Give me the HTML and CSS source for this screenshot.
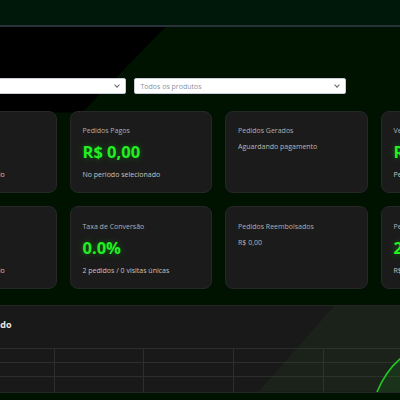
FILE: index.html
```html
<!DOCTYPE html>
<html lang="pt-BR">
<head>
<meta charset="utf-8">
<title>Dashboard</title>
<link rel="stylesheet" href="styles.css">
</head>
<body>
<header class="topbar"></header>
<div class="shade"></div>
<main class="content">
  <div class="filters">
    <div class="select"><span class="select-text"></span><span class="chev"></span></div>
    <div class="select"><span class="select-text">Todos os produtos</span><span class="chev"></span></div>
  </div>
  <section class="cards">
    <div class="card">
      <div class="card-title">Faturamento Total</div>
      <div class="card-value">R$ 0,00</div>
      <div class="card-sub">No período selecionado</div>
    </div>
    <div class="card">
      <div class="card-title">Pedidos Pagos</div>
      <div class="card-value">R$ 0,00</div>
      <div class="card-sub">No período selecionado</div>
    </div>
    <div class="card">
      <div class="card-title">Pedidos Gerados</div>
      <div class="card-note">Aguardando pagamento</div>
    </div>
    <div class="card">
      <div class="card-title">Vendas Aprovadas</div>
      <div class="card-value">R$ 0,00</div>
      <div class="card-sub">Pedidos pagos</div>
    </div>
    <div class="card">
      <div class="card-title">Ticket Médio</div>
      <div class="card-value">R$ 0,00</div>
      <div class="card-sub">No período selecionado</div>
    </div>
    <div class="card">
      <div class="card-title">Taxa de Conversão</div>
      <div class="card-value">0.0%</div>
      <div class="card-sub">2 pedidos / 0 visitas únicas</div>
    </div>
    <div class="card">
      <div class="card-title">Pedidos Reembolsados</div>
      <div class="card-note">R$ 0,00</div>
    </div>
    <div class="card">
      <div class="card-title">Pedidos Pendentes</div>
      <div class="card-value">2</div>
      <div class="card-sub">R$ 0,00</div>
    </div>
  </section>
  <section class="chart-card">
    <div class="chart-tint"></div>
    <h2 class="chart-title">Vendas no Período</h2>
    <svg class="chart" width="640" height="44" viewBox="0 0 640 44">
      <g stroke="#2b2e2b" stroke-width="1">
        <line x1="0" y1="0.5" x2="640" y2="0.5"/>
        <line x1="0" y1="14.5" x2="640" y2="14.5"/>
        <line x1="0" y1="28.5" x2="640" y2="28.5"/>
        <line x1="49.5" y1="0" x2="49.5" y2="44"/>
        <line x1="139.5" y1="0" x2="139.5" y2="44"/>
        <line x1="228.5" y1="0" x2="228.5" y2="44"/>
        <line x1="318.5" y1="0" x2="318.5" y2="44"/>
        <line x1="408.5" y1="0" x2="408.5" y2="44"/>
      </g>
      <path d="M462 44 C467 32 474 20 486 10 C492 6 498 4 504 3 L504 44 Z" fill="rgba(30,120,30,0.22)"/>
      <path d="M462 44 C467 32 474 20 486 10 C492 6 498 4 504 3" fill="none" stroke="#1fdc1f" stroke-width="1.6"/>
    </svg>
  </section>
</main>
</body>
</html>
```

FILE: styles.css
```css
* { box-sizing: border-box; }
html, body { margin: 0; padding: 0; }
body {
  background: #001300;
  font-family: "Open Sans", "Noto Sans", sans-serif;
  overflow: hidden;
  width: 400px;
  height: 400px;
  position: relative;
}
.topbar {
  height: 26.5px;
  background: #00180a;
  border-bottom: 2px solid #29313b;
}
.shade {
  position: absolute;
  left: 0;
  top: 26.5px;
  width: 170px;
  height: 100px;
  background: #000;
  clip-path: polygon(0 0, 166px 0, 82px 86px, 0 86px);
  z-index: 0;
}
.content {
  position: relative;
  z-index: 1;
  margin-left: -86px;
  padding-top: 51.5px;
  width: 760px;
}
.filters {
  display: flex;
  gap: 8.5px;
}
.select {
  width: 211.5px;
  height: 16px;
  background: #fff;
  border: 1px solid #c9ced6;
  border-radius: 2px;
  display: flex;
  align-items: center;
  justify-content: space-between;
  padding: 0 6px 0 5.5px;
}
.select-text {
  font-size: 7px;
  color: #8b93a3;
}
.chev {
  width: 4px;
  height: 4px;
  border-right: 1px solid #666;
  border-bottom: 1px solid #666;
  transform: rotate(45deg);
  margin-top: -3px;
}
.cards {
  margin-top: 16.5px;
  display: grid;
  grid-template-columns: repeat(4, 142.5px);
  grid-auto-rows: 82.5px;
  column-gap: 13px;
  row-gap: 13px;
}
.card {
  background: #1b1b1b;
  border: 1px solid #272727;
  border-radius: 8px;
  padding: 13.5px 12px;
}
.card-title {
  font-size: 7px;
  line-height: 11px;
  color: #b0b0b0;
}
.card-value {
  margin-top: 6px;
  font-size: 16.5px;
  line-height: 20px;
  font-weight: 700;
  color: #22f022;
  text-shadow: 0 0 6px rgba(0, 255, 0, 0.35);
}
.card-sub {
  margin-top: 7px;
  font-size: 7px;
  line-height: 11px;
  color: #c4c4c4;
}
.card-note {
  margin-top: 5px;
  font-size: 7px;
  line-height: 11px;
  color: #b8b8b8;
}
.chart-card {
  position: relative;
  margin-top: 16.5px;
  width: 640px;
  height: 87.5px;
  background: #191919;
  border: 1px solid #262626;
  border-radius: 8px 8px 0 0;
  padding: 12px 0 0 0;
  overflow: hidden;
}
.chart-tint {
  position: absolute;
  inset: 0;
  background: rgba(40, 90, 40, 0.16);
  clip-path: polygon(419px 0, 100% 0, 100% 100%, 344px 100%);
  pointer-events: none;
}
.chart-title {
  margin: 0 0 0 13px;
  font-size: 9px;
  line-height: 14px;
  font-weight: 700;
  color: #e8e8e8;
}
.chart {
  display: block;
  margin-top: 16px;
}
```
